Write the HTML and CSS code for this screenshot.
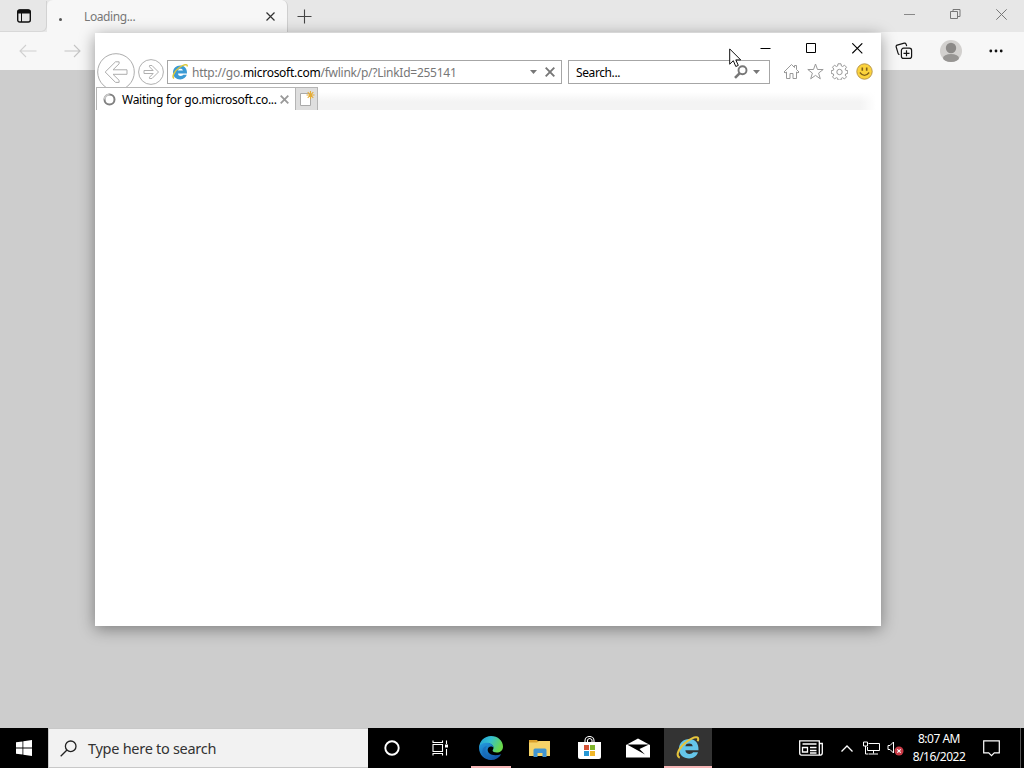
FILE: index.html
```html
<!DOCTYPE html>
<html lang="en">
<head>
    <meta charset="UTF-8">
    <meta name="viewport" content="width=device-width, initial-scale=1.0">
    <title>Desktop</title>
    <link rel="stylesheet" href="styles.css">
</head>
<body>
    <div class="desktop">
        <!-- Edge, behind -->
        <div class="edge">
            <div class="edge-tabs">
                <div class="edge-menu">
                    <svg width="16" height="16" viewBox="0 0 16 16"><rect x="1.7" y="2" width="12.6" height="12" rx="2" fill="none" stroke="#111" stroke-width="1.4"/><path d="M1.500 5.500V3.500Q1.500 1.500 4 1.500h8q2.500 0 2.500 2v2z" fill="#111"/><path d="M5.500 5v9" stroke="#111" stroke-width="1"/></svg>
                </div>
                <div class="edge-tab">
                    <span class="dot"></span>
                    <span class="edge-title">Loading...</span>
                    <svg width="9" height="9" viewBox="0 0 9 9"><path d="M.5.5l8 8M8.500.5l-8 8" stroke="#333" stroke-width="1.2"/></svg>
                </div>
                <svg class="edge-plus" width="15" height="15" viewBox="0 0 15 15"><path d="M7.500.5v14M.5 7.500h14" stroke="#444" stroke-width="1.1"/></svg>
                <div class="edge-controls">
                    <svg width="11" height="11" viewBox="0 0 11 11"><path d="M0 5.500h11" stroke="#888"/></svg>
                    <svg width="11" height="11" viewBox="0 0 11 11"><path d="M.5 2.500h7v7h-7zM3 2.500V.5h7v7H8" fill="none" stroke="#777"/></svg>
                    <svg width="11" height="11" viewBox="0 0 11 11"><path d="M.3.3l10.400 10.400M10.700.3L.3 10.700" stroke="#777"/></svg>
                </div>
            </div>
            <div class="edge-bar">
                <svg class="edge-back" width="18" height="14" viewBox="0 0 18 14"><path d="M17.500 7H1M7 1L1 7l6 6" fill="none" stroke="#d0d0d0" stroke-width="1.1"/></svg>
                <svg width="18" height="14" viewBox="0 0 18 14"><path d="M.5 7H16M10 1l6 6-6 6" fill="none" stroke="#c4c4c4" stroke-width="1.1"/></svg>
                <div class="edge-tools">
                    <svg width="18" height="18" viewBox="0 0 18 18" fill="none" stroke="#151515" stroke-width="1.2"><path d="M4.500 12.500Q3.400 12.500 3.100 11.300L1.200 5Q.8 3.600 2.200 3.200l7-2q1.400-.3 1.900 1l.6 2"/><rect x="6.400" y="6.200" width="10.200" height="10.200" rx="2.200"/><path d="M11.500 8.300v6M8.500 11.300h6"/></svg>
                    <svg width="22" height="22" viewBox="0 0 22 22"><circle cx="11" cy="11" r="11" fill="#d2d0ce"/><circle cx="11" cy="8" r="5.200" fill="#8b8987"/><ellipse cx="11" cy="18" rx="8" ry="4" fill="#979593"/></svg>
                    <svg width="14" height="4" viewBox="0 0 14 4" fill="#111"><circle cx="1.800" cy="2" r="1.400"/><circle cx="7" cy="2" r="1.400"/><circle cx="12.200" cy="2" r="1.400"/></svg>
                </div>
            </div>
        </div>

        <!-- Internet Explorer window -->
        <div class="ie">
            <div class="ie-titlebar">
                <svg width="11" height="11" viewBox="0 0 11 11"><path d="M.5 5.500h10" stroke="#000"/></svg>
                <svg width="11" height="11" viewBox="0 0 11 11"><path d="M.5.500h9v9h-9z" fill="none" stroke="#000"/></svg>
                <svg width="11" height="11" viewBox="0 0 11 11"><path d="M.3.3l10 10M10.300.3l-10 10" stroke="#000" stroke-width="1.100"/></svg>
            </div>
            <div class="ie-nav">
                <svg class="ie-back" width="38" height="38" viewBox="0 0 38 38" fill="#fff" stroke="#adadad"><circle cx="19" cy="19" r="18.300"/><path d="M8.200 19L18.500 8.800h3.600v2L16 16.800h14v4.500H16l6.100 6v2.100h-3.600z"/></svg>
                <svg class="ie-forward" width="26" height="26" viewBox="0 0 26 26" fill="#fff" stroke="#b0b0b0"><circle cx="13" cy="13" r="12.400"/><path d="M20.500 13L14 6.500h-2.500v1.300l3.700 3.700H6v3h9.200l-3.700 3.700v1.300H14z"/></svg>
                <div class="address">
                    <svg width="16" height="16" viewBox="0 0 32 32"><path d="M30 19H12c.3 3.500 2.500 5 5.700 5 2.300 0 3.900-.8 4.900-2.300h7C28 27 23 31 16.500 31 8 31 2 25 2 17S8 3 16.500 3C25 3 30.500 9 30 19zM12 13h9.800C21.300 10.500 19.600 9.500 16.900 9.500S12.500 10.500 12 13z" fill="#3a9ad4"/><path d="M4 29C-1 25 5 14 15 7 23 1 31-1 30.500 5" fill="none" stroke="#dcc83c" stroke-width="3"/></svg>
                    <span class="url">http://go.<b>microsoft.com</b>/fwlink/p/?LinkId=255141</span>
                    <svg class="drop" width="7" height="4" viewBox="0 0 7 4"><path d="M0 0h7L3.500 4z" fill="#777"/></svg>
                    <svg width="10" height="10" viewBox="0 0 10 10"><path d="M.7.7l8.600 8.600M9.300.7L.7 9.300" stroke="#777" stroke-width="1.900"/></svg>
                </div>
                <div class="search">
                    <span class="search-label">Search...</span>
                    <svg width="14" height="14" viewBox="0 0 14 14"><circle cx="8.500" cy="5.300" r="4" fill="none" stroke="#777" stroke-width="1.900"/><path d="M5.500 8.300L1 12.800" stroke="#777" stroke-width="2.600"/></svg>
                    <svg class="search-drop" width="7" height="4" viewBox="0 0 7 4"><path d="M0 0h7L3.500 4z" fill="#777"/></svg>
                </div>
                <div class="ie-tools">
                    <svg width="17" height="17" viewBox="0 0 17 17" fill="#fff" stroke="#999"><path d="M1 9l7.500-7.500L11.500 4.500V2.500h2v4L16 9l-1 1-1.500-1v6.500h-3.500v-5H7v5H3.500V9L2 10z"/></svg>
                    <svg width="17" height="17" viewBox="0 0 17 17" fill="#fff" stroke="#999"><path d="M8.500 1l2 5.500h5.700l-4.600 3.600 1.700 5.700-4.800-3.400-4.800 3.400 1.700-5.700L.8 6.500h5.700z"/></svg>
                    <svg width="17" height="17" viewBox="0 0 17 17" fill="#fff" stroke="#999"><path d="M7 .8h3l.4 2.200 1.200.5 1.900-1.300 2 2-1.300 1.900.5 1.200 2 .3v2.900l-2 .4-.5 1.200 1.300 1.800-2 2-1.900-1.200-1.200.5-.4 1.900H7l-.4-1.900-1.200-.5-1.900 1.200-2-2 1.300-1.800-.5-1.200-2-.4V7.600l2-.3.5-1.200L1.500 4.200l2-2 1.900 1.300L6.600 3z"/><circle cx="8.500" cy="9" r="2.700"/></svg>
                    <svg width="17" height="17" viewBox="0 0 17 17"><circle cx="8.500" cy="8.500" r="7.700" fill="#fbd23c" stroke="#b9974a"/><path d="M6.300 4.500v3.200M10.700 4.500v3.200" stroke="#80601a" stroke-width="1.600"/><path d="M3.800 9.500q4.700 5.800 9.400 0" fill="none" stroke="#80601a" stroke-width="1.200"/></svg>
                </div>
            </div>
            <div class="ie-tabs">
                <div class="ie-tab">
                    <svg width="13" height="13" viewBox="0 0 13 13" fill="none" stroke-width="2"><circle cx="6.500" cy="6.500" r="5" stroke="#808080"/><path d="M1.500 6.500a5 5 0 0 1 5-5" stroke="#c8c8c8"/></svg>
                    <span class="ie-title">Waiting for go.microsoft.co...</span>
                    <svg width="9" height="9" viewBox="0 0 9 9"><path d="M.7.7l7.600 7.600M8.300.7L.7 8.300" stroke="#999" stroke-width="1.800"/></svg>
                </div>
                <div class="ie-newtab">
                    <svg width="16" height="16" viewBox="0 0 16 16"><path d="M1.500 2.500h10v12h-10z" fill="#fff" stroke="#aaa"/><path d="M11.500 0v8M7.500 4h8M8.700 1.200l5.600 5.600M14.300 1.200L8.700 6.800" stroke="#e5ac35" stroke-width="1.100"/></svg>
                </div>
                <div class="ie-strip"></div>
            </div>
        </div>

        <svg class="cursor" width="13" height="20" viewBox="0 0 13 20"><path d="M.7.900v15.300l3.600-3.500 2.500 5.800 2.500-1.100-2.500-5.500h4.900z" fill="#fff" stroke="#111"/></svg>

        <div class="taskbar">
            <div class="start">
                <svg width="16" height="16" viewBox="0 0 16 16" fill="#fff"><path d="M0 2.300L6.500 1.400v6.200H0zM7.300 1.300L16 0v7.600H7.300zM0 8.400h6.500v6.200L0 13.700zM7.300 8.400H16V16l-8.700-1.300z"/></svg>
            </div>
            <div class="task-search">
                <svg width="17" height="17" viewBox="0 0 17 17" fill="none" stroke="#222" stroke-width="1.300"><circle cx="10.700" cy="6.300" r="5.300"/><path d="M7 10L.7 16.300"/></svg>
                <span class="task-label">Type here to search</span>
            </div>
            <div class="task-item">
                <svg width="16" height="16" viewBox="0 0 16 16"><circle cx="8" cy="8" r="6.700" fill="none" stroke="#fff" stroke-width="1.900"/></svg>
            </div>
            <div class="task-item">
                <svg width="18" height="16" viewBox="0 0 18 16" fill="none" stroke="#fff" stroke-width="1.100"><path d="M1 4.500h9.500v7H1zM1 .5v2h9.500v-2M1 15.500v-2h9.500v2M14.500.5v3.500M14.500 9v6.500"/><path d="M13 4.500h3v3h-3z" fill="#fff" stroke="none"/></svg>
            </div>
            <div class="task-item open">
                <svg width="24" height="24" viewBox="0 0 24 24">
                    <defs>
                        <linearGradient id="edgeTop" x1="0" y1="0" x2="1" y2=".4"><stop offset="0" stop-color="#209bd8"/><stop offset=".5" stop-color="#35c1cf"/><stop offset="1" stop-color="#69d94b"/></linearGradient>
                        <linearGradient id="edgeLow" x1="0" y1="0" x2=".7" y2="1"><stop offset="0" stop-color="#249de0"/><stop offset="1" stop-color="#1255a5"/></linearGradient>
                    </defs>
                    <path d="M0 11.500C.5 5 5.500 0 12 0c7 0 12 4.900 12 10.500 0 4-3 6-6.200 6-2.600 0-4.200-1-4.200-2 0-.7.900-1.200.9-2.700 0-2-2-4.300-5.500-4.300-4.200 0-7.500 1.700-9 4z" fill="url(#edgeTop)"/>
                    <path d="M0 11.500C1 8 4.500 6.700 8 6.700c4 0 6.500 2.300 6.500 5C13 9.500 9 10 8.700 13.500c-.2 4.200 5 7.500 13.500 4.700C20 22 16.500 24 12 24 5.500 24 0 19 0 11.500z" fill="url(#edgeLow)"/>
                    <path d="M8 10c-3.500 5-.5 12 6 13.700C7 24.500 3 20 3.300 15 3.500 12 5.500 10.300 8 10z" fill="#1768b8" opacity=".6"/>
                </svg>
            </div>
            <div class="task-item">
                <svg width="22" height="19" viewBox="0 0 22 19"><path d="M0 1h8l2 2.500V17H0z" fill="#d9a02c"/><path d="M0 3.500h8L9.500 2H21v15H0z" fill="#f5d368"/><path d="M4.500 18V11q0-1.500 1.500-1.500h10q1.500 0 1.500 1.500v7h-4v-4h-5v4z" fill="#4095d1"/></svg>
            </div>
            <div class="task-item">
                <svg width="23" height="24" viewBox="0 0 23 24"><path d="M7 7V4.500a4.500 4 0 0 1 9 0V7M9.500 7V4Q11.500 1 14 4v3" fill="none" stroke="#fff" stroke-width="1.100"/><path d="M0 6h23v15q0 2-2 2H2q-2 0-2-2z" fill="#fff"/><path d="M6 9h5v5H6z" fill="#d55236"/><path d="M12 9h5v5h-5z" fill="#80b52b"/><path d="M6 15h5v5H6z" fill="#2698d5"/><path d="M12 15h5v5h-5z" fill="#f1b728"/></svg>
            </div>
            <div class="task-item">
                <svg width="24" height="20" viewBox="0 0 24 20"><path d="M0 7L12 .5 24 7v12.500H0z" fill="#fff"/><path d="M1 6.500h22L13.500 11l5.500 5.500L11 12z" fill="#000"/></svg>
            </div>
            <div class="task-item open active">
                <svg width="24" height="24" viewBox="0 0 32 32"><path d="M30 19H12.500c.3 3.500 2.500 5 5.500 5 2.300 0 3.700-.8 4.700-2.300h6.600C27.500 27 23.500 30 17.500 30 10 30 4 25 4 17S10 4 17.500 4C26 4 30.500 10 30 19zM12.500 13.500h9.800C21.800 11 20.200 10 17.500 10s-4.500 1-5 3.500z" fill="#65c6ea"/><path d="M5 29C-2 26 5 14 15 7 24 1 32-1 29 7" fill="none" stroke="#e6c43c" stroke-width="2.800"/></svg>
            </div>
            <div class="tray">
                <svg class="news" width="24" height="16" viewBox="0 0 24 16" fill="none" stroke="#fff" stroke-width="1.300"><path d="M.7.800h19.600v14.400H2.500Q.7 15.200.7 13zM20.300 3.500h3V13q0 2.200-3 2.200M3.500 4h14M11 7.500h6.500M11 10.500h6.500M3.500 7.500h5v4.500h-5zM11 13h6.500"/></svg>
                <svg class="chevron" width="12" height="7" viewBox="0 0 12 7"><path d="M.5 6.500L6 1l5.500 5.500" fill="none" stroke="#fff" stroke-width="1.300"/></svg>
                <svg class="network" width="17" height="14" viewBox="0 0 17 14" fill="none" stroke="#fff"><path d="M5.500 2.500h11v7h-12V6M10.500 9.500v3M6 13h9M.5 1h4v4h-4zM2.500 5v8h3"/></svg>
                <svg class="volume" width="17" height="16" viewBox="0 0 17 16"><path d="M1 5.500h2L6.500 2v11L3 9.500H1z" fill="none" stroke="#fff"/><circle cx="12" cy="11" r="4.500" fill="#c93a46"/><path d="M10.300 9.300l3.400 3.400M13.700 9.300l-3.400 3.400" stroke="#fff" stroke-width="1.100"/></svg>
                <div class="clock">
                    <span class="time">8:07 AM</span>
                    <span class="date">8/16/2022</span>
                </div>
                <svg class="notify" width="17" height="17" viewBox="0 0 17 17"><path d="M.7.800h15.600v12h-5L8.500 15.700 5.700 12.800h-5z" fill="none" stroke="#fff" stroke-width="1.200"/></svg>
                <div class="peek"></div>
            </div>
        </div>
    </div>
</body>
</html>
```
FILE: styles.css
```css
body {
    margin: 0;
    font-family: "Noto Sans", "Open Sans", sans-serif;
    font-size: 12px;
    color: #111;
}

svg {
    display: block;
    flex-shrink: 0;
}

span {
    white-space: nowrap;
}

.desktop {
    position: relative;
    display: flex;
    flex-direction: column;
    width: 1024px;
    height: 768px;
    overflow: hidden;
}

/* Edge */
.edge {
    flex: 1;
    background-color: #cdcdcd;
}

.edge-tabs {
    display: flex;
    align-items: center;
    height: 32px;
    background-color: #e7e7e7;
}

.edge-menu {
    display: flex;
    align-items: center;
    justify-content: center;
    width: 47px;
    height: 31px;
    box-sizing: border-box;
    padding-left: 2px;
    border-right: 1px solid #d2d2d2;
    border-bottom: 1px solid #d8d8d8;
    border-bottom-right-radius: 6px;
}

.edge-tab {
    display: flex;
    align-items: center;
    width: 241px;
    height: 32px;
    box-sizing: border-box;
    padding: 0 12px;
    background-color: #f7f7f7;
    border-right: 1px solid #cfcfcf;
    border-radius: 6px 6px 0 0;
}

.dot {
    width: 3px;
    height: 3px;
    margin-top: 7px;
    border-radius: 50%;
    background-color: #555;
}

.edge-title {
    flex: 1;
    margin-left: 22px;
    color: #777;
    letter-spacing: -0.4px;
}

.edge-plus {
    margin-left: 9px;
}

.edge-controls {
    display: flex;
    gap: 35px;
    margin: -4px 17px 0 auto;
}

.edge-bar {
    display: flex;
    align-items: center;
    height: 38px;
    padding: 0 21px 0 19px;
    background-color: #f7f7f7;
}

.edge-back {
    margin-right: 27px;
}

.edge-tools {
    display: flex;
    align-items: center;
    gap: 27px;
    margin-left: auto;
}

/* Internet Explorer */
.ie {
    position: absolute;
    left: 95px;
    top: 33px;
    width: 786px;
    height: 593px;
    background-color: #fff;
    box-shadow: 0 3px 15px rgba(0, 0, 0, 0.4);
}

.ie-titlebar {
    display: flex;
    align-items: center;
    justify-content: flex-end;
    gap: 35px;
    height: 27px;
    padding: 4px 18px 0 0;
    box-sizing: border-box;
}

.ie-nav {
    display: flex;
    align-items: flex-start;
    height: 27px;
    padding-left: 2px;
}

.ie-back {
    margin-top: -7px;
}

.ie-forward {
    margin: -1px 3px 0;
}

.address,
.search {
    display: flex;
    align-items: center;
    height: 24px;
    box-sizing: border-box;
    border: 1px solid #a6a6a6;
    background-color: #fff;
}

.address {
    width: 395px;
    margin-right: 6px;
    padding: 0 6px 0 4px;
}

.url {
    flex: 1;
    margin-left: 4px;
    color: #777;
    letter-spacing: -0.26px;
}

.url b {
    font-weight: normal;
    color: #000;
}

.drop {
    margin-right: 8px;
}

.search {
    width: 202px;
    padding: 0 9px 0 7px;
}

.search-label {
    flex: 1;
    color: #000;
    letter-spacing: -0.4px;
}

.search-drop {
    margin-left: 5px;
}

.ie-tools {
    display: flex;
    gap: 7.4px;
    margin: 3px 0 0 12.5px;
}

.ie-tabs {
    position: relative;
    display: flex;
    height: 23px;
}

.ie-tab {
    display: flex;
    align-items: center;
    width: 199px;
    margin-left: 1px;
    padding: 0 6px 0 6px;
    box-sizing: border-box;
    background-color: #fff;
    border: 1px solid #b5b5b5;
    border-width: 1px 0 0 1px;
}

.ie-title {
    flex: 1;
    margin-left: 6px;
    color: #000;
    letter-spacing: -0.27px;
}

.ie-newtab {
    display: flex;
    align-items: center;
    justify-content: center;
    width: 23px;
    box-sizing: border-box;
    background-color: #dedede;
    border: 1px solid #b5b5b5;
    border-bottom: none;
}

.ie-strip {
    flex: 1;
    margin: 5px 5px 0 0;
    background: linear-gradient(to right, transparent 97%, #fff), linear-gradient(#fff, #f3f3f3 55%, #f3f3f3);
}

.cursor {
    position: absolute;
    left: 729px;
    top: 48px;
}

/* Taskbar */
.taskbar {
    display: flex;
    height: 40px;
    background-color: #000;
}

.start {
    display: flex;
    align-items: center;
    justify-content: center;
    width: 48px;
}

.task-search {
    display: flex;
    align-items: center;
    width: 320px;
    box-sizing: border-box;
    padding-left: 11px;
    background-color: #f2f2f2;
    border: 1px solid #c8c8c8;
    border-right: none;
}

.task-label {
    margin-left: 11px;
    font-size: 14.5px;
    letter-spacing: -0.28px;
    color: #333;
}

.task-item {
    display: flex;
    align-items: center;
    justify-content: center;
    width: 48px;
    height: 40px;
    box-sizing: border-box;
    margin-right: 1.2px;
}

.open {
    width: 40px;
    margin: 0 5px 0 4.6px;
    padding-top: 2px;
    border-bottom: 2px solid #f5b5b5;
}

.active {
    width: 48px;
    margin: 0;
    background-color: #333;
}

.tray {
    display: flex;
    align-items: center;
    margin-left: auto;
    color: #fff;
}

.chevron {
    margin: 0 10px 0 18px;
}

.volume {
    margin: 0 10px 0 7px;
}

.clock {
    display: flex;
    flex-direction: column;
    align-items: center;
    width: 50px;
    line-height: 18px;
    letter-spacing: -0.5px;
}

.notify {
    margin: 0 20px 0 19px;
}

.peek {
    width: 3px;
    height: 40px;
    border-left: 1px solid #555;
}
```
